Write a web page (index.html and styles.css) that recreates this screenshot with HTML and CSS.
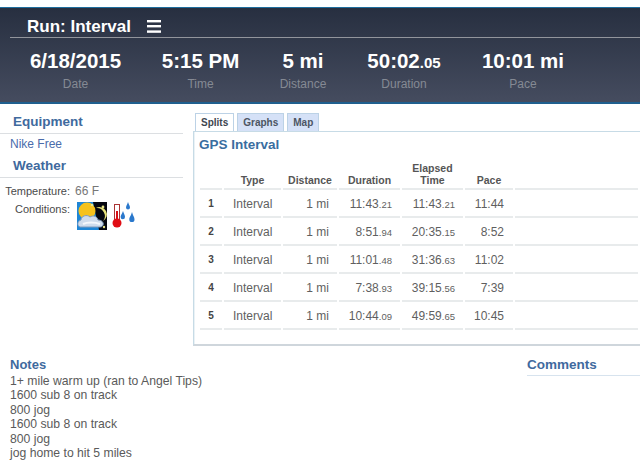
FILE: index.html
```html
<!DOCTYPE html>
<html lang="en">
<head>
<meta charset="utf-8">
<title>Run: Interval</title>
<link rel="stylesheet" href="styles.css">
</head>
<body>
<header class="hero">
  <div class="hero-title">
    <h1>Run: Interval</h1>
    <svg class="menu-icon" width="14" height="13" viewBox="0 0 14 13"><rect y="0" width="14" height="2.4" fill="#fff"/><rect y="5" width="14" height="2.4" fill="#fff"/><rect y="10.4" width="14" height="2.4" fill="#fff"/></svg>
  </div>
  <div class="stats">
    <div class="stat"><div class="stat-value">6/18/2015</div><div class="stat-label">Date</div></div>
    <div class="stat"><div class="stat-value">5:15 PM</div><div class="stat-label">Time</div></div>
    <div class="stat"><div class="stat-value">5 mi</div><div class="stat-label">Distance</div></div>
    <div class="stat"><div class="stat-value">50:02<small>.05</small></div><div class="stat-label">Duration</div></div>
    <div class="stat"><div class="stat-value">10:01 mi</div><div class="stat-label">Pace</div></div>
  </div>
</header>

<div class="content">
  <aside class="sidebar">
    <h2 class="side-heading">Equipment</h2>
    <a class="gear" href="#">Nike Free</a>
    <h2 class="side-heading">Weather</h2>
    <dl class="weather">
      <dt>Temperature:</dt><dd class="temp">66 F</dd>
      <dt>Conditions:</dt>
      <dd class="icons">
        <svg width="60" height="28" viewBox="0 0 60 28">
          <rect x="0" y="0" width="30" height="28" fill="#1f86d6"/>
          <path d="M16 0H30V28H22Z" fill="#05070f"/>
          <circle cx="10" cy="9" r="8.5" fill="#f6c21c"/>
          <path d="M19 6a7 7 0 0 1 7 13a8 8 0 0 0-7-13Z" fill="#e6e27a"/>
          <circle cx="15" cy="3" r="1.3" fill="#e8e48a"/>
          <circle cx="26" cy="5" r="1.4" fill="#e8e48a"/>
          <circle cx="27" cy="25" r="1.2" fill="#e8e48a"/>
          <path d="M3 25c-3-1-3-6 1-7c0-4 6-6 9-3c3-2 7-1 8 3c4 0 6 3 5 5c-1 2-2 2-4 2Z" fill="#cfdcec" stroke="#7f9bbd" stroke-width="1"/>
          <path d="M6 22c4-2 12-2 17 0" fill="none" stroke="#f4f7fb" stroke-width="2"/>
          <rect x="37.500" y="2.500" width="5" height="17" fill="#fff" stroke="#a33" stroke-width="1"/>
          <rect x="39" y="9" width="2" height="11" fill="#d90f16"/>
          <circle cx="40" cy="21" r="4.500" fill="#e00d14"/>
          <path d="M51 0c1 3 2 4 2 5.500a2 2 0 0 1-4 0c0-1.500 1-2.500 2-5.500Z" fill="#2a78cc"/>
          <path d="M46 9c1 3 2 4 2 6a2.200 2.200 0 0 1-4.400 0c0-2 1.400-3 2.400-6Z" fill="#2a78cc"/>
          <path d="M55 10c1 4 2.500 5 2.500 7.500a2.600 2.600 0 0 1-5.200 0c0-2.500 1.700-3.500 2.700-7.500Z" fill="#2a78cc"/>
        </svg>
      </dd>
    </dl>
  </aside>

  <main class="main">
    <nav class="tabs">
      <a class="tab tab-active" href="#">Splits</a>
      <a class="tab" href="#">Graphs</a>
      <a class="tab" href="#">Map</a>
    </nav>
    <section class="panel">
      <h3 class="panel-title">GPS Interval</h3>
      <table class="splits">
        <thead>
          <tr>
            <th class="c-num"></th>
            <th class="c-type">Type</th>
            <th class="c-dist">Distance</th>
            <th class="c-time">Duration</th>
            <th class="c-time">Elapsed<br>Time</th>
            <th class="c-pace">Pace</th>
            <th></th>
          </tr>
        </thead>
        <tbody>
          <tr><td class="num">1</td><td class="type">Interval</td><td class="right">1 mi</td><td class="right">11:43<small>.21</small></td><td class="right">11:43<small>.21</small></td><td class="pace">11:44</td><td></td></tr>
          <tr><td class="num">2</td><td class="type">Interval</td><td class="right">1 mi</td><td class="right">8:51<small>.94</small></td><td class="right">20:35<small>.15</small></td><td class="pace">8:52</td><td></td></tr>
          <tr><td class="num">3</td><td class="type">Interval</td><td class="right">1 mi</td><td class="right">11:01<small>.48</small></td><td class="right">31:36<small>.63</small></td><td class="pace">11:02</td><td></td></tr>
          <tr><td class="num">4</td><td class="type">Interval</td><td class="right">1 mi</td><td class="right">7:38<small>.93</small></td><td class="right">39:15<small>.56</small></td><td class="pace">7:39</td><td></td></tr>
          <tr><td class="num">5</td><td class="type">Interval</td><td class="right">1 mi</td><td class="right">10:44<small>.09</small></td><td class="right">49:59<small>.65</small></td><td class="pace">10:45</td><td></td></tr>
        </tbody>
      </table>
    </section>
  </main>
</div>

<div class="lower">
  <section class="notes">
    <h2 class="lower-heading">Notes</h2>
    <p>1+ mile warm up (ran to Angel Tips)<br>1600 sub 8 on track<br>800 jog<br>1600 sub 8 on track<br>800 jog<br>jog home to hit 5 miles</p>
  </section>
  <section class="comments">
    <h2 class="lower-heading comments-heading">Comments</h2>
  </section>
</div>
</body>
</html>
```
FILE: styles.css
```css
* { box-sizing: border-box; }
html, body { margin: 0; padding: 0; }
body {
  background: #fff;
  color: #5a5a5a;
  font-family: "Liberation Sans", Arial, sans-serif;
  font-size: 12px;
  width: 640px;
  height: 474px;
  overflow: hidden;
}

/* Header */
.hero {
  margin-top: 7px;
  height: 97px;
  padding-left: 10px;
  background: linear-gradient(#272f40, #454c5f);
  border-top: 1px solid #1f6e9e;
  border-bottom: 2px solid #1f5f8e;
}
.hero-title {
  display: flex;
  align-items: center;
  height: 30px;
  padding-left: 17px;
  padding-top: 8px;
  border-bottom: 1px solid #92959c;
}
.hero-title h1 {
  margin: 0;
  font-size: 17px;
  font-weight: bold;
  color: #fff;
}
.menu-icon { margin-left: 16px; }
.stats {
  display: grid;
  grid-template-columns: 131px 119px 86px 116px 122px;
  padding-top: 11px;
}
.stat { text-align: center; }
.stat-value {
  font-size: 20.500px;
  line-height: 23px;
  font-weight: bold;
  color: #fff;
}
.stat-value small { font-size: 15px; line-height: 0; }
.stat-label {
  margin-top: 5px;
  font-size: 12px;
  line-height: 14px;
  color: #858a94;
}

/* Columns */
.content { display: flex; height: 243px; }
.sidebar { width: 183px; flex: none; padding-top: 9px; }
.side-heading {
  margin: 0;
  height: 21px;
  padding-left: 13px;
  font-size: 13.500px;
  line-height: 17px;
  font-weight: bold;
  color: #3f6a9e;
  border-bottom: 1px solid #dcdfe2;
}
.gear {
  display: block;
  height: 23px;
  padding: 3px 0 0 10px;
  line-height: 14px;
  color: #4a6cab;
  text-decoration: none;
}
.weather {
  display: grid;
  grid-template-columns: 70px 1fr;
  column-gap: 5px;
  margin: 6px 0 0;
}
.weather dt {
  text-align: right;
  font-size: 11px;
  line-height: 14px;
  color: #4a4a4a;
}
.weather dd { margin: 0; }
.temp { color: #777; line-height: 14px; }
.weather dt:nth-of-type(2) { margin-top: 4px; }
.icons { margin-top: 4px !important; padding-left: 2px; height: 28px; }
.icons svg { display: block; width: 60px; height: 28px; }

.main { flex: 1; margin-left: 10px; padding-top: 9px; min-width: 0; }
.tabs { display: flex; gap: 3px; padding-left: 2px; height: 18px; }
.tab {
  height: 18px;
  padding: 3px 5px 0;
  font-size: 10px;
  line-height: 12px;
  font-weight: bold;
  color: #4c5563;
  text-decoration: none;
  background: #d5e1f7;
  border: 1px solid #bcd2e6;
  border-bottom: none;
}
.tab-active {
  background: #fff;
  color: #3e4650;
}
.panel {
  height: 215px;
  border: 1px solid #c7dbe6;
  border-right: none;
  border-bottom: 2px solid #cfd6dc;
  box-shadow: inset 1px 0 0 #eaf2f6;
}
.panel-title {
  margin: 0;
  padding: 5px 0 0 5px;
  font-size: 13.500px;
  line-height: 15px;
  font-weight: bold;
  color: #3a6d9f;
}
.splits {
  table-layout: fixed;
  width: 442px;
  margin: 3px 0 0 4px;
  border-collapse: separate;
  border-spacing: 2px 0;
}
.splits th {
  height: 35px;
  padding: 0 0 2px;
  vertical-align: bottom;
  text-align: center;
  font-size: 10.500px;
  line-height: 12px;
  font-weight: bold;
  color: #555;
  border-bottom: 2px solid #e8ebec;
}
.c-num { width: 22px; }
.c-type { width: 57px; }
.c-dist { width: 54px; }
.c-time { width: 61px; }
.c-pace { width: 48px; }
.splits td {
  height: 28px;
  padding: 2px 0 0;
  font-size: 12px;
  line-height: 14px;
  color: #5f5f5f;
  border-bottom: 2px solid #e8ebec;
  white-space: nowrap;
}
.splits td small { font-size: 9.500px; }
.splits .num { text-align: center; font-size: 10px; font-weight: bold; color: #444; }
.splits .type { padding-left: 9px; }
.splits .right { text-align: right; padding-right: 8px; }
.splits .pace { text-align: right; padding-right: 9px; }

/* Lower */
.lower { display: flex; justify-content: space-between; padding-top: 10px; }
.notes { padding-left: 10px; }
.lower-heading {
  margin: 0;
  font-size: 13px;
  line-height: 16px;
  font-weight: bold;
  color: #3f6a9e;
}
.notes p { margin: 1px 0 0; font-size: 12.200px; line-height: 14.400px; color: #5a5a5a; }
.comments { width: 113px; }
.comments-heading {
  font-size: 13.500px;
  padding-bottom: 2px;
  border-bottom: 1px solid #d7e3ee;
}
```
